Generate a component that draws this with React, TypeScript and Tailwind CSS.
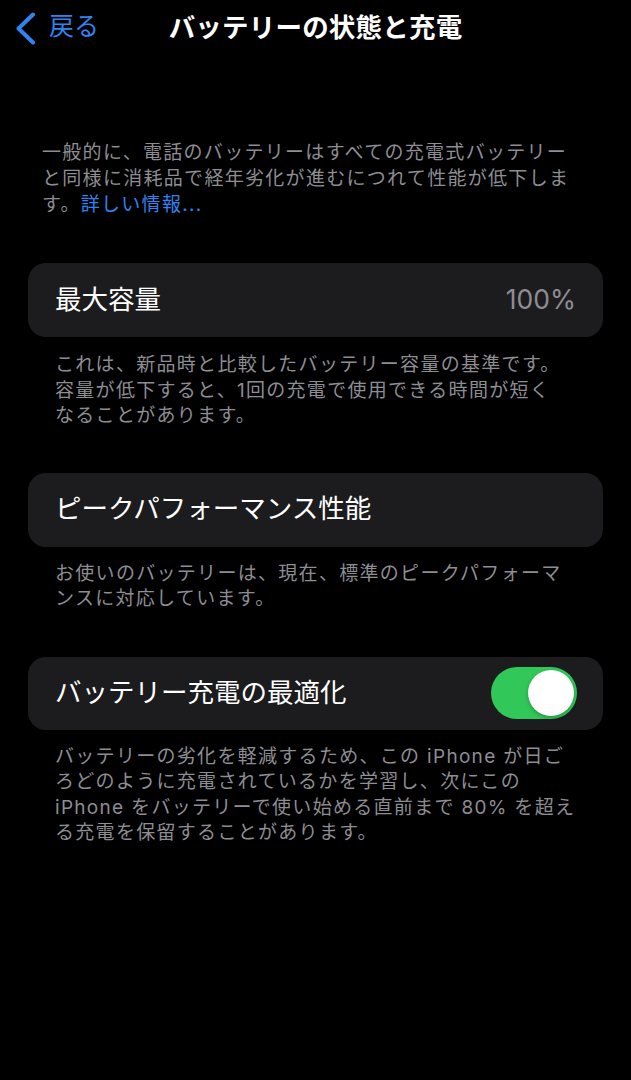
import { useState } from "react";

const footerCls =
  "mx-[55px] text-[19px] leading-[25.5px] tracking-[1.3px] text-[#8d8d93] whitespace-nowrap";

function Toggle({ on, onChange }: { on: boolean; onChange: () => void }) {
  return (
    <button
      onClick={onChange}
      className={`w-[86px] h-[52px] rounded-full p-[3px] flex items-center ${
        on ? "bg-[#32c759] justify-end" : "bg-[#39393d] justify-start"
      }`}
    >
      <span className="block w-[46px] h-[46px] rounded-full bg-white shadow-[0_2px_4px_rgba(0,0,0,0.25)]" />
    </button>
  );
}

export default function App() {
  const [optimized, setOptimized] = useState(true);

  return (
    <div className="min-h-[1080px] bg-black text-white font-['Inter','Noto_Sans_CJK_JP',sans-serif]">
      {/* Nav bar */}
      <header className="h-[56px] grid grid-cols-[1fr_auto_1fr] items-center">
        <button className="flex items-center gap-[13px] pl-[15px] text-[#2f84f0]">
          <svg width="21" height="33" viewBox="0 0 21 33" fill="none">
            <path
              d="M18 2.5 L3.5 16.5 L18 30.5"
              stroke="currentColor"
              strokeWidth="4"
              strokeLinecap="round"
              strokeLinejoin="round"
            />
          </svg>
          <span className="text-[25px] leading-none pb-[3px]">戻る</span>
        </button>
        <h1 className="text-[26.5px] font-semibold leading-none tracking-[0.2px] pb-[1px]">
          バッテリーの状態と充電
        </h1>
        <div />
      </header>

      {/* Intro */}
      <p className="mt-[84px] mx-[42px] text-[19px] leading-[26px] tracking-[1.3px] text-[#8d8d93] whitespace-nowrap">
        一般的に、電話のバッテリーはすべての充電式バッテリー
        <br />
        と同様に消耗品で経年劣化が進むにつれて性能が低下しま
        <br />
        す。<span className="text-[#2f84f0]">詳しい情報...</span>
      </p>

      {/* Maximum capacity */}
      <div className="mt-[45px] mx-[28px] h-[74px] px-[27px] rounded-[18px] bg-[#1c1c1e] flex items-center justify-between">
        <span className="text-[26.5px] leading-none pb-[2px]">最大容量</span>
        <span className="text-[26.5px] leading-none text-[#8d8d93] pb-[2px]">100%</span>
      </div>
      <p className={`mt-[15px] ${footerCls}`}>
        これは、新品時と比較したバッテリー容量の基準です。
        <br />
        容量が低下すると、1回の充電で使用できる時間が短く
        <br />
        なることがあります。
      </p>

      {/* Peak performance */}
      <div className="mt-[44px] mx-[28px] h-[74px] px-[27px] rounded-[18px] bg-[#1c1c1e] flex items-center">
        <span className="text-[26.5px] leading-none pb-[2px]">ピークパフォーマンス性能</span>
      </div>
      <p className={`mt-[14px] ${footerCls}`}>
        お使いのバッテリーは、現在、標準のピークパフォーマ
        <br />
        ンスに対応しています。
      </p>

      {/* Optimized charging */}
      <div className="mt-[45px] mx-[28px] h-[73px] px-[26px] pl-[27px] rounded-[18px] bg-[#1c1c1e] flex items-center justify-between">
        <span className="text-[26.5px] leading-none pb-[2px]">バッテリー充電の最適化</span>
        <Toggle on={optimized} onChange={() => setOptimized(!optimized)} />
      </div>
      <p className={`mt-[14px] ${footerCls}`}>
        バッテリーの劣化を軽減するため、この iPhone が日ご
        <br />
        ろどのように充電されているかを学習し、次にこの
        <br />
        iPhone をバッテリーで使い始める直前まで 80% を超え
        <br />
        る充電を保留することがあります。
      </p>
    </div>
  );
}
